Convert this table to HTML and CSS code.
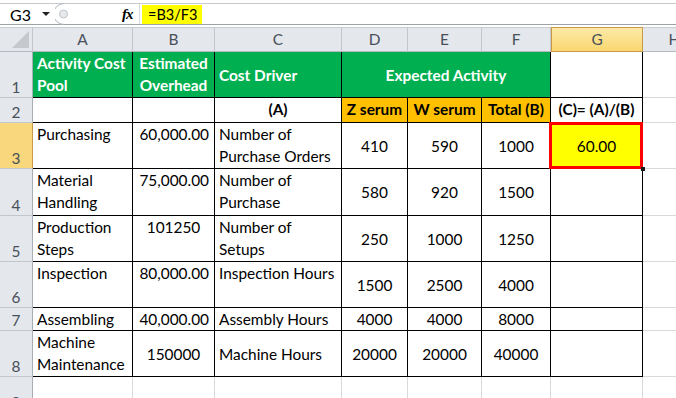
FILE: index.html
```html
<!DOCTYPE html>
<html lang="en">
<head>
    <meta charset="UTF-8">
    <title>Activity Based Costing - Sheet</title>
    <link rel="stylesheet" href="styles.css">
</head>
<body>
    <!-- formula bar -->
    <div class="formula-bar">
        <div class="name-box">
            <span class="name-text">G3</span>
            <span class="name-arrow"></span>
        </div>
        <svg class="splitter" width="16" height="22" viewBox="0 0 16 22">
            <path d="M9 0.5 A10.5 10.5 0 0 0 9 21.5" fill="none" stroke="#aeb3b9" stroke-width="1"/>
            <circle cx="8.5" cy="11" r="4" fill="#e6e8eb" stroke="#c0c4c9"/>
        </svg>
        <span class="fx">fx</span>
        <div class="formula">
            <span class="formula-text">=B3/F3</span>
        </div>
    </div>

    <div class="sheet">
        <!-- column headers -->
        <div class="hdr corner"><span class="corner-tri"></span></div>
        <div class="hdr">A</div>
        <div class="hdr">B</div>
        <div class="hdr">C</div>
        <div class="hdr">D</div>
        <div class="hdr">E</div>
        <div class="hdr">F</div>
        <div class="hdr hdr-sel">G</div>
        <div class="hdr hdr-last">H</div>

        <!-- row 1 -->
        <div class="rh">1</div>
        <div class="c green b">Activity Cost<br>Pool</div>
        <div class="c green b ctr">Estimated<br>Overhead</div>
        <div class="c green b mid">Cost Driver</div>
        <div class="c green b mid ctr span3">Expected Activity</div>
        <div class="c"></div>
        <div class="c out"></div>

        <!-- row 2 -->
        <div class="rh">2</div>
        <div class="c"></div>
        <div class="c"></div>
        <div class="c b ctr">(A)</div>
        <div class="c orange b ctr">Z serum</div>
        <div class="c orange b ctr">W serum</div>
        <div class="c orange b ctr">Total (B)</div>
        <div class="c b ctr">(C)= (A)/(B)</div>
        <div class="c out"></div>

        <!-- row 3 -->
        <div class="rh rh-sel">3</div>
        <div class="c">Purchasing</div>
        <div class="c r">60,000.00</div>
        <div class="c">Number of<br>Purchase Orders</div>
        <div class="c mid ctr">410</div>
        <div class="c mid ctr">590</div>
        <div class="c mid ctr">1000</div>
        <div class="c mid ctr yellow active">60.00</div>
        <div class="c out"></div>

        <!-- row 4 -->
        <div class="rh">4</div>
        <div class="c">Material<br>Handling</div>
        <div class="c r">75,000.00</div>
        <div class="c">Number of<br>Purchase</div>
        <div class="c mid ctr">580</div>
        <div class="c mid ctr">920</div>
        <div class="c mid ctr">1500</div>
        <div class="c"></div>
        <div class="c out"></div>

        <!-- row 5 -->
        <div class="rh">5</div>
        <div class="c">Production<br>Steps</div>
        <div class="c ctr">101250</div>
        <div class="c">Number of<br>Setups</div>
        <div class="c mid ctr">250</div>
        <div class="c mid ctr">1000</div>
        <div class="c mid ctr">1250</div>
        <div class="c"></div>
        <div class="c out"></div>

        <!-- row 6 -->
        <div class="rh">6</div>
        <div class="c">Inspection</div>
        <div class="c r">80,000.00</div>
        <div class="c">Inspection Hours</div>
        <div class="c mid ctr">1500</div>
        <div class="c mid ctr">2500</div>
        <div class="c mid ctr">4000</div>
        <div class="c"></div>
        <div class="c out"></div>

        <!-- row 7 -->
        <div class="rh">7</div>
        <div class="c">Assembling</div>
        <div class="c r">40,000.00</div>
        <div class="c">Assembly Hours</div>
        <div class="c mid ctr">4000</div>
        <div class="c mid ctr">4000</div>
        <div class="c mid ctr">8000</div>
        <div class="c"></div>
        <div class="c out"></div>

        <!-- row 8 -->
        <div class="rh">8</div>
        <div class="c">Machine<br>Maintenance</div>
        <div class="c mid ctr">150000</div>
        <div class="c mid">Machine Hours</div>
        <div class="c mid ctr">20000</div>
        <div class="c mid ctr">20000</div>
        <div class="c mid ctr">40000</div>
        <div class="c"></div>
        <div class="c out"></div>

        <!-- row 9 -->
        <div class="rh">9</div>
        <div class="c out"></div>
        <div class="c out"></div>
        <div class="c out"></div>
        <div class="c out"></div>
        <div class="c out"></div>
        <div class="c out"></div>
        <div class="c out"></div>
        <div class="c out"></div>
    </div>
</body>
</html>
```

FILE: styles.css
```css
body {
    margin: 0;
    width: 676px;
    height: 398px;
    overflow: hidden;
    background: #ffffff;
    font-family: Lato, "Liberation Sans", sans-serif;
    font-size: 15.4px;
    color: #000000;
}

/* ---------- formula bar ---------- */
.formula-bar {
    display: flex;
    align-items: center;
    height: 20px;
    margin-top: 3px;
    border-top: 1px solid #c6cacf;
    border-bottom: 1px solid #9da2a8;
}
.name-box {
    display: flex;
    align-items: center;
    width: 55px;
    height: 100%;
    box-sizing: border-box;
    padding-left: 10px;
}
.name-text {
    width: 32px;
    font-size: 16px;
}
.name-arrow {
    width: 0;
    height: 0;
    border-left: 4px solid transparent;
    border-right: 4px solid transparent;
    border-top: 4px solid #222;
}
.fx {
    margin-left: 51px;
    font-family: "Liberation Serif", serif;
    font-style: italic;
    font-weight: bold;
    font-size: 15px;
    width: 14px;
    letter-spacing: -1px;
}
.formula {
    margin-left: 3px;
    border-left: 1px solid #d6d9dd;
    height: 100%;
    padding-left: 2px;
    display: flex;
    align-items: center;
}
.formula-text {
    background: #ffff00;
    padding: 0 5px 0 6px;
    height: 19px;
    line-height: 19px;
    font-size: 14.5px;
}

/* ---------- sheet grid ---------- */
.sheet {
    display: grid;
    grid-template-columns: 33px 100px 82px 127px 66px 74px 69px 92px 64px;
    grid-template-rows: 25px 46px 25px 46px 47px 46px 46px 23px 46px 36px;
    margin-top: 2px;
}

.hdr {
    background: #e4e7eb;
    color: #48505a;
    border-top: 1px solid #c9cdd2;
    border-right: 1px solid #c3c7cc;
    border-bottom: 1px solid #b4b9bf;
    box-sizing: border-box;
    text-align: center;
    line-height: 22px;
}
.hdr-sel {
    background: linear-gradient(#fdeaa8, #f9d66f);
    border: 1px solid #c99a47;
}
.corner {
    position: relative;
}
.corner-tri {
    position: absolute;
    right: 3px;
    bottom: 3px;
    width: 0;
    height: 0;
    border-left: 17px solid transparent;
    border-bottom: 17px solid #c5c9ce;
}

.rh {
    background: #e4e7eb;
    color: #48505a;
    border-right: 1px solid #a9aeb4;
    border-bottom: 1px solid #c3c7cc;
    box-sizing: border-box;
    display: flex;
    flex-direction: column;
    justify-content: flex-end;
    align-items: center;
    line-height: 20px;
}
.rh-sel {
    background: #f9d77c;
    border-right-color: #c99a47;
}

.c {
    box-sizing: border-box;
    border-right: 1px solid #000;
    border-bottom: 1px solid #000;
    display: flex;
    flex-direction: column;
    justify-content: flex-start;
    padding: 0 4px;
    line-height: 22px;
    white-space: nowrap;
    overflow: hidden;
}
.c.out {
    border-right: 1px solid #d9d9d9;
    border-bottom: 1px solid #d9d9d9;
}
.mid {
    justify-content: center;
}
.ctr { text-align: center; }
.r { text-align: right; padding-right: 5px; }
.b { font-weight: bold; }
.span3 { grid-column: span 3; }

.green {
    background: #00b050;
    color: #ffffff;
}
.orange { background: #ffc000; }
.yellow { background: #ffff00; }

/* active cell marker */
.active {
    position: relative;
    overflow: visible;
}
.active::after {
    content: "";
    position: absolute;
    left: -2px;
    top: -1px;
    right: -1px;
    bottom: -1px;
    border: 3px solid #ff0000;
}
.active::before {
    content: "";
    position: absolute;
    right: -3px;
    bottom: -3px;
    width: 4px;
    height: 4px;
    background: #1a1a1a;
    z-index: 2;
}
```
